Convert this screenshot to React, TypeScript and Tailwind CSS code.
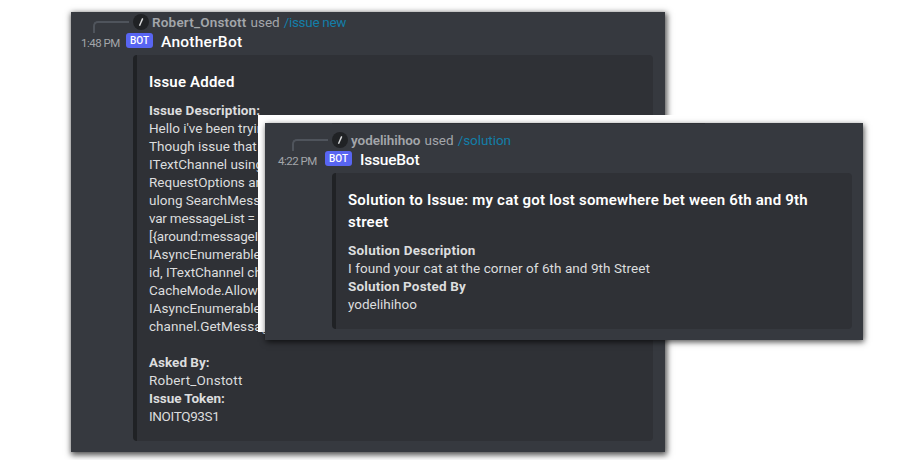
import React from "react";

type Line = { text: string; cls?: string; bold?: boolean };

function Message(props: {
  user: string;
  userCls: string;
  command: string;
  commandCls: string;
  time: string;
  timeCls: string;
  bot: string;
  botCls: string;
  headCls: string;
  embedCls: string;
  title: Line[];
  lines: Line[];
}) {
  return (
    <>
      <div className={`flex flex-col ${props.headCls}`}>
        <div className="flex h-[20px] items-center">
          <div className="ml-[22px] mt-[10px] h-[12px] w-[36px] shrink-0 rounded-tl-[5px] border-l-2 border-t-2 border-[#4f545c]" />
          <div className="ml-[4px] flex size-[16px] shrink-0 items-center justify-center rounded-full bg-[#202225]">
            <svg width="16" height="16" viewBox="0 0 16 16">
              <path d="M9.7 4.4 6.5 11.7" stroke="#dcddde" strokeWidth="1.4" />
            </svg>
          </div>
          <div className="ml-[3px] flex whitespace-pre text-[13.5px] leading-[18px] text-[#a3a6aa]">
            <span className={`font-semibold ${props.userCls}`}>{props.user}</span>
            <span className="ml-[4px]">used</span>
            <span className={`ml-[4px] text-[#137ea8] ${props.commandCls}`}>{props.command}</span>
          </div>
        </div>
        <div className="flex h-[20px] items-center">
          <span className={`shrink-0 whitespace-nowrap pt-[3px] text-[11.5px] tracking-[-0.5px] text-[#a3a6aa] ${props.timeCls}`}>{props.time}</span>
          <span className="-mt-[3px] flex h-[15px] w-[27px] shrink-0 items-center justify-center rounded-[3px] bg-[#5865f2] text-[10px] font-medium text-white">BOT</span>
          <span className={`ml-[8px] mt-[1px] whitespace-nowrap text-[15.5px] font-medium text-white ${props.botCls}`}>{props.bot}</span>
        </div>
      </div>
      <div className={`w-[520px] rounded-[4px] border-l-4 border-[#202225] bg-[#2f3136] py-[16px] pl-[12px] ${props.embedCls}`}>
        <div className="mb-[8px]">
          {props.title.map((l, i) => (
            <div key={i} className="h-[22px] whitespace-nowrap text-[15px] font-semibold leading-[23px] tracking-[0.2px] text-white">{l.text}</div>
          ))}
        </div>
        {props.lines.map((l, i) => (
          <div key={i} className={`h-[18px] whitespace-pre text-[13.5px] leading-[18px] text-[#dcddde] ${l.bold ? "font-bold" : ""} ${l.cls ?? ""}`}>{l.text}</div>
        ))}
      </div>
    </>
  );
}

export default function App() {
  return (
    <div className="relative h-[460px] w-[900px] overflow-hidden bg-white font-[Roboto,sans-serif]">
      <section className="absolute left-[71px] top-[12px] h-[440px] w-[594px] bg-[#36393f] shadow-[1px_2px_6px_1px_rgba(0,0,0,0.7)]">
        <Message
          user="Robert_Onstott"
          userCls="tracking-[0.2px]"
          command="/issue new"
          commandCls="tracking-[-0.3px]"
          time="1:48 PM"
          timeCls="ml-[10px] w-[45px]"
          bot="AnotherBot"
          botCls="tracking-[0.25px]"
          headCls="h-[43px]"
          embedCls="ml-[62px]"
          title={[{ text: "Issue Added" }]}
          lines={[
            { text: "Issue Description:", bold: true, cls: "tracking-[0.1px]" },
            { text: "Hello i've been trying", cls: "tracking-[-0.04px]" },
            { text: "Though issue that I" },
            { text: "ITextChannel using" },
            { text: "RequestOptions and" },
            { text: "ulong SearchMessage" },
            { text: "var messageList = ", cls: "tracking-[-0.22px]" },
            { text: "[{around:messageId", cls: "tracking-[-0.18px]" },
            { text: "IAsyncEnumerable" },
            { text: "id, ITextChannel cha" },
            { text: "CacheMode.Allow" },
            { text: "IAsyncEnumerable" },
            { text: "channel.GetMessag", cls: "tracking-[0.05px]" },
            { text: "" },
            { text: "Asked By:", bold: true },
            { text: "Robert_Onstott", cls: "tracking-[0.2px]" },
            { text: "Issue Token:", bold: true, cls: "tracking-[-0.05px]" },
            { text: "INOITQ93S1", cls: "tracking-[-0.35px]" },
          ]}
        />
      </section>
      <div className="absolute left-[258px] top-[115px] h-[217px] w-[642px] bg-white" />
      <section className="absolute left-[265px] top-[123px] h-[217px] w-[598px] bg-[#36393f] shadow-[1px_2px_6px_0px_rgba(0,0,0,0.7)]">
        <div className="-mb-px ml-[67px] h-px w-[373px] bg-[#2f3136]" />
        <Message
          user="yodelihihoo"
          userCls="tracking-[-0.05px]"
          command="/solution"
          commandCls="tracking-[-0.05px]"
          time="4:22 PM"
          timeCls="ml-[8px] w-[47px]"
          bot="IssueBot"
          botCls="tracking-[-0.2px]"
          headCls="h-[50px] pt-[7px] pl-[5px]"
          embedCls="ml-[67px]"
          title={[
            { text: "Solution to Issue: my cat got lost somewhere bet ween 6th and 9th" },
            { text: "street" },
          ]}
          lines={[
            { text: "Solution Description", bold: true, cls: "tracking-[0.22px]" },
            { text: "I found your cat at the corner of 6th and 9th Street", cls: "tracking-[0.06px]" },
            { text: "Solution Posted By", bold: true, cls: "tracking-[0.15px]" },
            { text: "yodelihihoo" },
          ]}
        />
      </section>
    </div>
  );
}
